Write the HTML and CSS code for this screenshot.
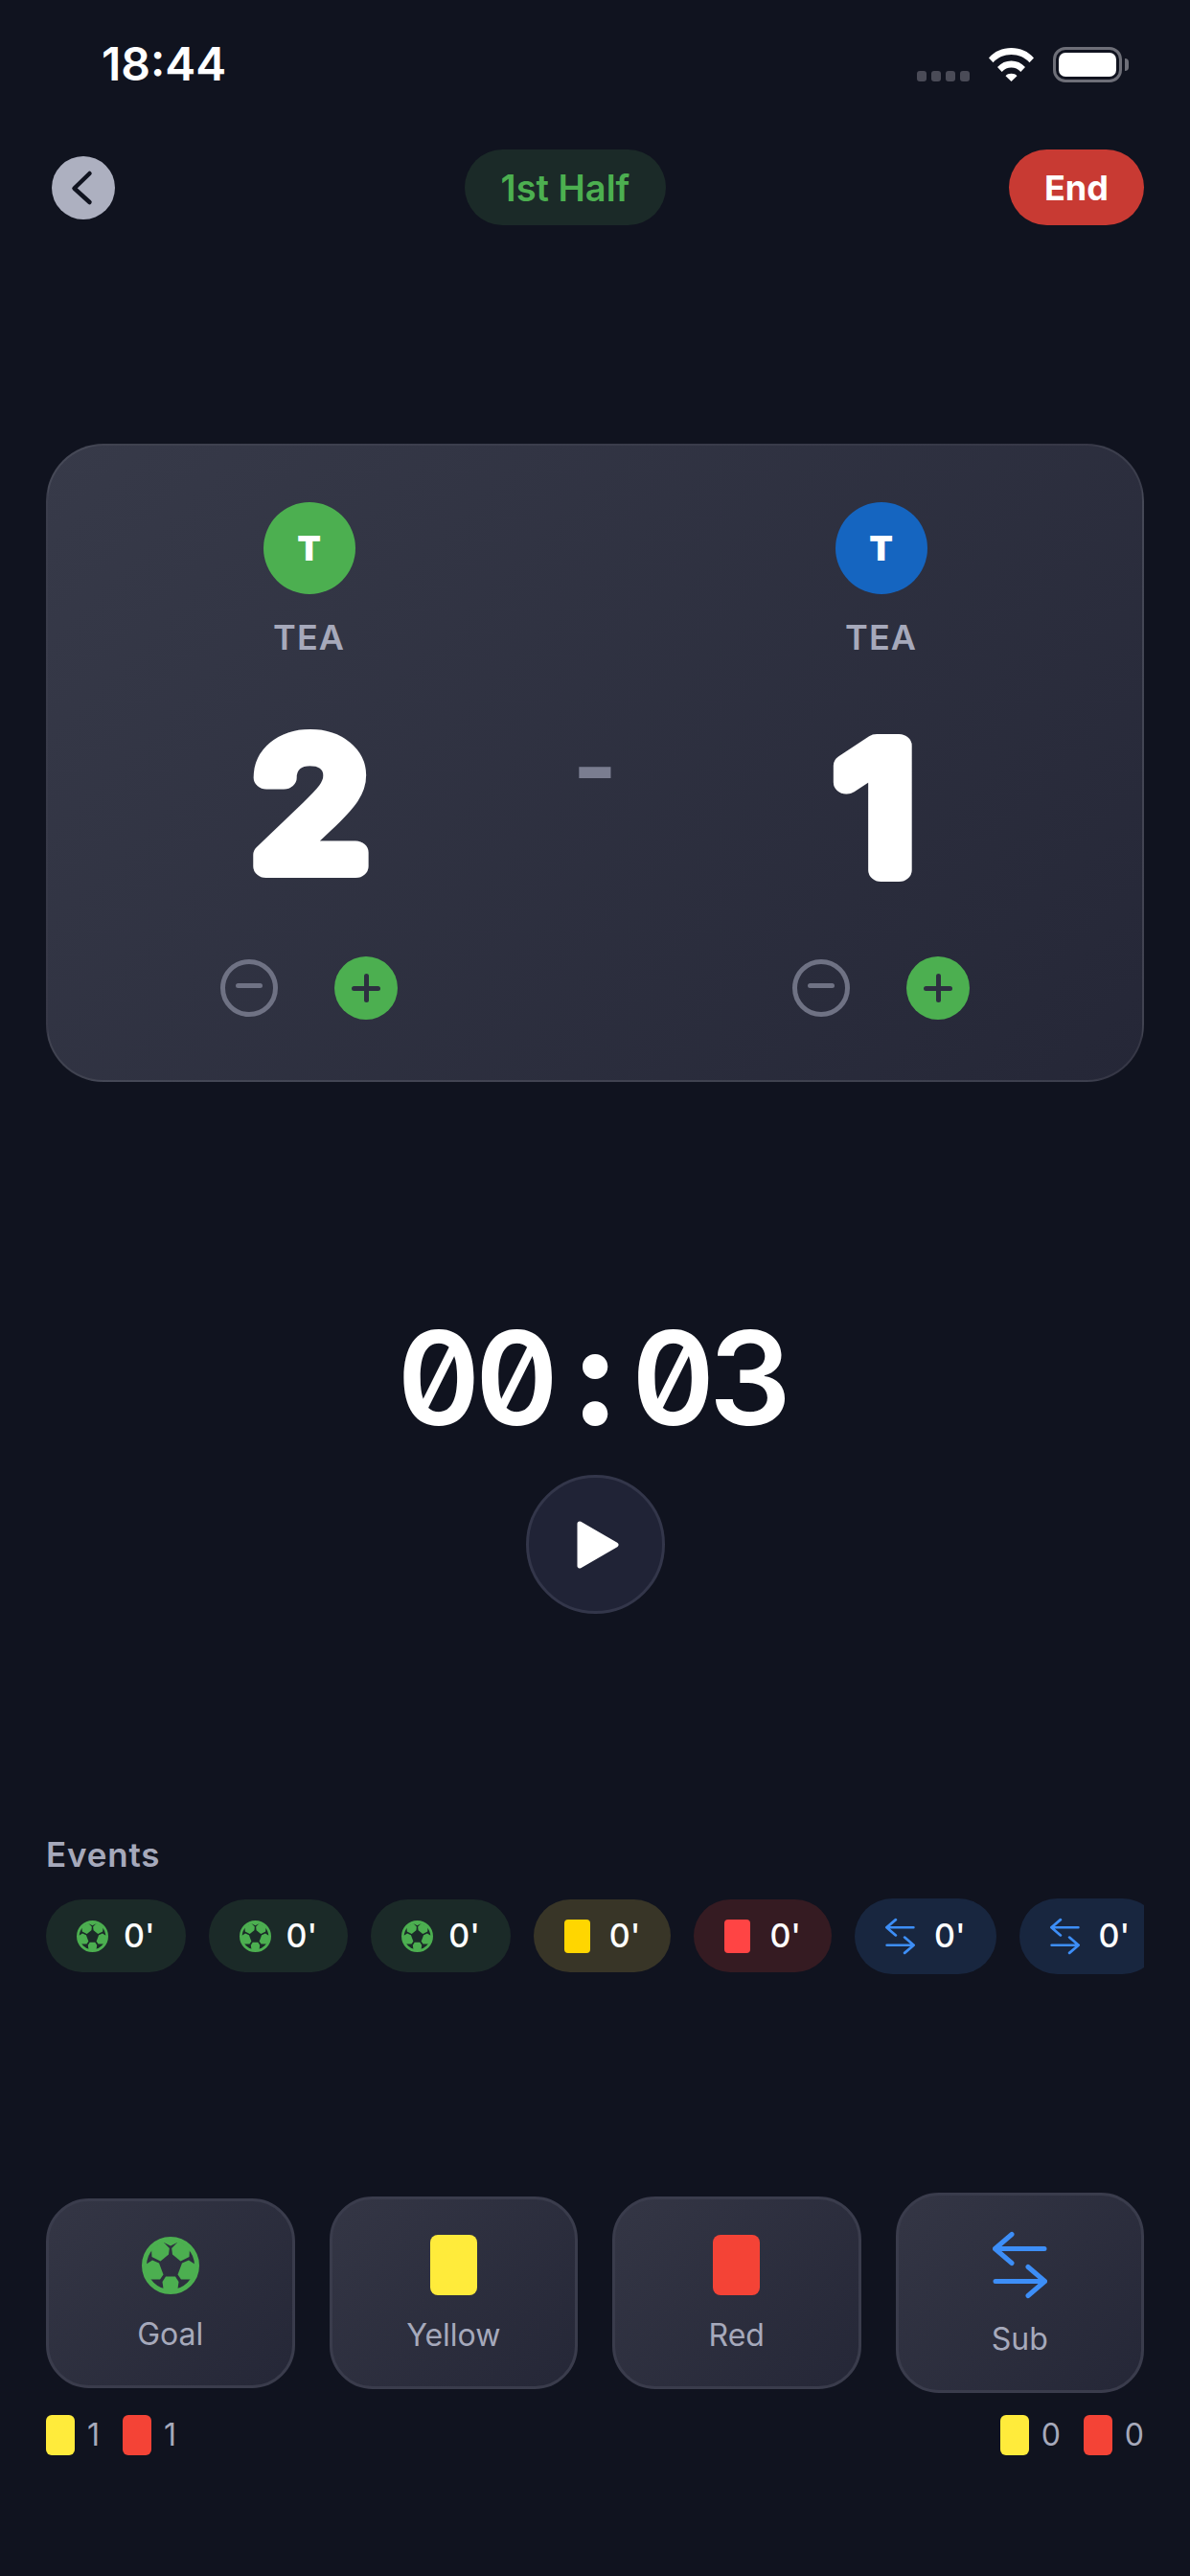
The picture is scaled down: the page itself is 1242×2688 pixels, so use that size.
FILE: index.html
```html
<!DOCTYPE html>
<html lang="en">
<head>
  <meta charset="UTF-8">
  <title>Match</title>
  <link rel="stylesheet" href="styles.css">
</head>
<body>

  <svg class="defs" width="0" height="0">
    <symbol id="ball" viewBox="0 0 60 60">
      <circle cx="30" cy="30" r="27.5" fill="none" stroke="currentColor" stroke-width="5"/>
      <polygon fill="currentColor" points="10,12 22,5 28.800,12 28,18.500 19.500,25.500 10.500,21"/>
      <polygon fill="currentColor" points="50,12 38,5 31.200,12 32,18.500 40.500,25.500 49.500,21"/>
      <polygon fill="currentColor" points="2.500,30 11,24.500 18,27.500 22.500,39.500 19,44.500 7.500,44.500 3,37"/>
      <polygon fill="currentColor" points="57.500,30 49,24.500 42,27.500 37.500,39.500 41,44.500 52.500,44.500 57,37"/>
      <polygon fill="currentColor" points="21.500,47 25,41.500 35,41.500 38.500,47 37,58 23,58"/>
      <polygon fill="currentColor" points="20,3 40,3 39,5 30,9.500 21,5"/>
    </symbol>
    <symbol id="swap" viewBox="0 -1 57 71">
      <path d="M20 2.500 2.500 17.500 20 32.500M2.500 17.500H54M37 36.500 54.500 51.500 37 66.500M54.500 51.500H3" fill="none" stroke="currentColor" stroke-width="5" stroke-linecap="round" stroke-linejoin="round"/>
    </symbol>
  </svg>

  <div class="screen">

    <div class="status-bar">
      <span class="clock">18:44</span>
      <div class="status-icons">
        <div class="signal"><i></i><i></i><i></i><i></i></div>
        <svg class="wifi" viewBox="0 0 47 36">
          <path d="M0 11.5C6 4.500 14 1 23.500 1S41 4.500 47 11.500l-4.500 4.800C37.500 10.800 31 8 23.500 8S9.500 10.800 4.500 16.300Z" fill="#fff"/>
          <path d="M9 21C13 16.600 18 14.500 23.500 14.500S34 16.600 38 21l-4.700 5C30.500 23 27.300 21.600 23.500 21.600S16.500 23 13.700 26Z" fill="#fff"/>
          <path d="M17.500 30.200C19 28.600 21 27.800 23.500 27.800S28 28.600 29.500 30.200L23.500 36Z" fill="#fff"/>
        </svg>
        <div class="battery"><div class="battery-fill"></div></div>
        <div class="battery-nub"></div>
      </div>
    </div>

    <div class="top-bar">
      <button class="back-btn">
        <svg viewBox="0 0 66 66" width="66" height="66"><path d="M39.500 18 23.500 33.500 39.500 48" fill="none" stroke="#10131f" stroke-width="4.500" stroke-linecap="round" stroke-linejoin="round"/></svg>
      </button>
      <div class="period-pill">1st Half</div>
      <button class="end-btn">End</button>
    </div>

    <div class="score-card">
      <div class="team">
        <div class="avatar avatar-green">T</div>
        <div class="team-name">TEA</div>
        <svg class="score" viewBox="0 0 240 220"><text transform="translate(121 171) scale(1.13 1)">2</text></svg>
        <div class="score-btns">
          <div class="minus-btn"></div>
          <div class="plus-btn"></div>
        </div>
      </div>
      <div class="score-dash">-</div>
      <div class="team">
        <div class="avatar avatar-blue">T</div>
        <div class="team-name">TEA</div>
        <svg class="score" viewBox="0 0 240 220"><text transform="translate(115 175) scale(1.13 1)">1</text></svg>
        <div class="score-btns">
          <div class="minus-btn"></div>
          <div class="plus-btn"></div>
        </div>
      </div>
    </div>

    <div class="timer"><span>0</span><span>0</span><span class="timer-colon">:</span><span>0</span><span>3</span></div>
    <button class="play-btn">
      <svg viewBox="0 0 44 50" width="44" height="50"><path d="M3 3 41 25 3 47Z" fill="#fff" stroke="#fff" stroke-width="5" stroke-linejoin="round"/></svg>
    </button>

    <div class="events-title">Events</div>
    <div class="events">
      <div class="chip chip-green"><svg class="chip-ball"><use href="#ball"/></svg><span>0'</span></div>
      <div class="chip chip-green"><svg class="chip-ball"><use href="#ball"/></svg><span>0'</span></div>
      <div class="chip chip-green"><svg class="chip-ball"><use href="#ball"/></svg><span>0'</span></div>
      <div class="chip chip-yellow"><div class="chip-card"></div><span>0'</span></div>
      <div class="chip chip-red"><div class="chip-card"></div><span>0'</span></div>
      <div class="chip chip-blue"><svg class="chip-swap"><use href="#swap"/></svg><span>0'</span></div>
      <div class="chip chip-blue"><svg class="chip-swap"><use href="#swap"/></svg><span>0'</span></div>
    </div>

    <div class="actions">
      <button class="action"><svg class="action-ball"><use href="#ball"/></svg><span>Goal</span></button>
      <button class="action"><div class="action-card card-yellow"></div><span>Yellow</span></button>
      <button class="action"><div class="action-card card-red"></div><span>Red</span></button>
      <button class="action"><svg class="action-swap"><use href="#swap"/></svg><span>Sub</span></button>
    </div>

    <div class="tally">
      <div class="tally-group">
        <div class="tally-card card-yellow"></div><span>1</span>
        <div class="tally-card card-red"></div><span>1</span>
      </div>
      <div class="tally-group">
        <div class="tally-card card-yellow"></div><span>0</span>
        <div class="tally-card card-red"></div><span>0</span>
      </div>
    </div>

  </div>

</body>
</html>
```

FILE: styles.css
```css
* {
  box-sizing: border-box;
}
body {
  margin: 0;
  background: #10131f;
  font-family: 'Inter', 'Liberation Sans', sans-serif;
  color: #fff;
}
button {
  font-family: inherit;
  border: none;
  padding: 0;
  cursor: pointer;
}
.defs {
  position: absolute;
}
.screen {
  width: 1242px;
  height: 2688px;
  overflow: hidden;
}

/* status bar */
.status-bar {
  height: 156px;
  padding: 38px 64px 0 106px;
  display: flex;
  justify-content: space-between;
  align-items: flex-start;
}
.clock {
  font-size: 48px;
  line-height: 58px;
  font-weight: 600;
}
.status-icons {
  display: flex;
  margin-top: 11px;
}
.signal {
  display: flex;
  gap: 5px;
  margin-top: 25px;
  height: 11px;
}
.signal i {
  width: 10px;
  height: 11px;
  border-radius: 3px;
  background: #4a4b57;
}
.wifi {
  width: 47px;
  height: 36px;
  margin-left: 20px;
}
.battery {
  width: 72px;
  height: 37px;
  margin-left: 20px;
  padding: 3px;
  border: 3px solid #6e6f78;
  border-radius: 13px;
}
.battery-fill {
  height: 100%;
  background: #fff;
  border-radius: 7px;
}
.battery-nub {
  width: 4px;
  height: 13px;
  margin: 12px 0 0 3px;
  background: #6e6f78;
  border-radius: 0 5px 5px 0;
}

/* top bar */
.top-bar {
  height: 79px;
  padding: 0 48px 0 54px;
  display: flex;
  justify-content: space-between;
  align-items: center;
}
.back-btn {
  width: 66px;
  height: 66px;
  border-radius: 50%;
  background: #adb0c0;
}
.back-btn svg {
  display: block;
}
.period-pill {
  width: 210px;
  height: 79px;
  margin-left: 7px;
  border-radius: 40px;
  background: #1b2a28;
  color: #4caf50;
  font-size: 38px;
  font-weight: 600;
  display: flex;
  align-items: center;
  justify-content: center;
}
.end-btn {
  width: 141px;
  height: 79px;
  border-radius: 40px;
  background: #c83a33;
  color: #fff;
  font-size: 36px;
  font-weight: 700;
}

/* score card */
.score-card {
  margin: 228px 48px 0;
  height: 666px;
  padding: 59px 0 0;
  border: 2px solid rgba(255, 255, 255, 0.08);
  border-radius: 60px;
  background: linear-gradient(135deg, #373a49, #252737);
  display: grid;
  grid-template-columns: 1fr 52px 1fr;
}
.team {
  display: flex;
  flex-direction: column;
  align-items: center;
}
.avatar {
  width: 96px;
  height: 96px;
  border-radius: 50%;
  font-size: 36px;
  font-weight: 900;
  display: flex;
  align-items: center;
  justify-content: center;
}
.avatar-green {
  background: #4caf50;
}
.avatar-blue {
  background: #1565c0;
}
.team-name {
  margin-top: 23px;
  font-size: 36px;
  line-height: 44px;
  font-weight: 600;
  letter-spacing: 1px;
  color: #a6a9bb;
}
.score {
  display: block;
  width: 240px;
  height: 220px;
  margin-top: 46px;
}
.score text {
  font-family: 'Inter', sans-serif;
  font-size: 178px;
  font-weight: 400;
  fill: #fff;
  stroke: #fff;
  stroke-width: 24px;
  stroke-linejoin: round;
  stroke-linecap: round;
  text-anchor: middle;
}
.score-btns {
  margin-top: 45px;
  display: flex;
  align-items: center;
  gap: 59px;
}
.minus-btn {
  position: relative;
  width: 60px;
  height: 60px;
  border: 5px solid #6f7284;
  border-radius: 50%;
}
.minus-btn::before {
  content: "";
  position: absolute;
  left: 11px;
  top: 20px;
  width: 28px;
  height: 5px;
  border-radius: 3px;
  background: #6f7284;
}
.plus-btn {
  position: relative;
  width: 66px;
  height: 66px;
  border-radius: 50%;
  background: #4caf50;
}
.plus-btn::before,
.plus-btn::after {
  content: "";
  position: absolute;
  background: #2d3040;
  border-radius: 3px;
}
.plus-btn::before {
  left: 18px;
  top: 30.5px;
  width: 30px;
  height: 5px;
}
.plus-btn::after {
  left: 30.5px;
  top: 18px;
  width: 5px;
  height: 30px;
}
.score-dash {
  margin-top: 226px;
  height: 100px;
  font-size: 100px;
  line-height: 100px;
  font-weight: 700;
  color: #7a7d90;
  text-align: center;
}

/* timer */
.timer {
  margin-top: 236px;
  height: 140px;
  display: flex;
  justify-content: center;
  align-items: baseline;
  font-size: 135px;
  line-height: 140px;
  font-weight: 600;
  font-feature-settings: "zero", "tnum";
}
.timer span {
  width: 81.6px;
  display: flex;
  justify-content: center;
}
.timer .timer-colon {
  font-size: 142px;
  font-weight: 800;
}
.play-btn {
  display: flex;
  align-items: center;
  justify-content: center;
  width: 145px;
  height: 145px;
  margin: 34px auto 0;
  padding-left: 6px;
  background: #202336;
  border: 3px solid #33364a;
  border-radius: 50%;
}

/* events */
.events-title {
  margin: 230px 48px 0;
  font-size: 35px;
  line-height: 42px;
  font-weight: 600;
  letter-spacing: 0.8px;
  color: #a6a9bb;
}
.events {
  margin: 24px 48px 0;
  height: 80px;
  display: flex;
  align-items: center;
  gap: 24px;
  overflow: hidden;
}
.chip {
  flex-shrink: 0;
  display: flex;
  align-items: center;
  gap: 16px;
  padding: 20px 32px;
  border-radius: 40px;
  font-size: 34px;
  line-height: 36px;
  font-weight: 500;
}
.chip-green {
  background: #1b2a28;
  color: #4caf50;
}
.chip-yellow,
.chip-red,
.chip-blue {
  gap: 20px;
}
.chip-yellow {
  background: #383527;
}
.chip-red {
  background: #351b22;
}
.chip-blue {
  background: #18263f;
  color: #3d8ef7;
}
.chip span {
  color: #fff;
}
.chip-ball {
  width: 33px;
  height: 33px;
}
.chip-swap {
  width: 31px;
  height: 39px;
}
.chip-card {
  width: 27px;
  height: 35px;
  border-radius: 4px;
}
.chip-yellow .chip-card {
  background: #ffd600;
}
.chip-red .chip-card {
  background: #ff4444;
}

/* action buttons */
.actions {
  margin: 228px 48px 0;
  height: 209px;
  display: grid;
  grid-template-columns: repeat(4, 1fr);
  gap: 36px;
  align-items: center;
}
.action {
  display: flex;
  flex-direction: column;
  align-items: center;
  gap: 22px;
  padding: 37px 0 34px;
  border: 3px solid #3a3c4c;
  border-radius: 45px;
  background: linear-gradient(135deg, #343645, #252737);
  color: #a6a9bb;
  font-size: 32px;
  line-height: 39px;
  font-weight: 400;
}
.action-ball {
  width: 60px;
  height: 60px;
  color: #4caf50;
}
.action-swap {
  width: 57px;
  height: 71px;
  color: #3d8ef7;
}
.action-card {
  width: 49px;
  height: 63px;
  border-radius: 8px;
}
.card-yellow {
  background: #ffeb3b;
}
.card-red {
  background: #f44336;
}

/* card tally */
.tally {
  margin: 23px 48px 0;
  display: flex;
  justify-content: space-between;
}
.tally-group {
  display: flex;
  align-items: center;
  font-size: 32px;
  line-height: 42px;
  color: #a6a9bb;
}
.tally-card {
  width: 30px;
  height: 42px;
  margin-right: 13px;
  border-radius: 6px;
}
.tally-group span + .tally-card {
  margin-left: 24px;
}
```
